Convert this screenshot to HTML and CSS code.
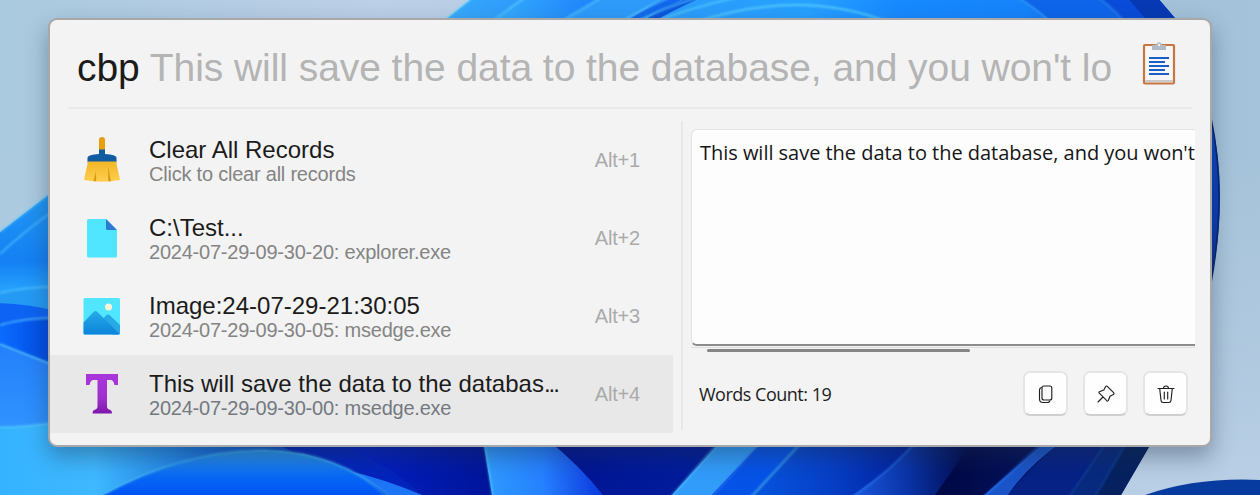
FILE: index.html
```html
<!DOCTYPE html>
<html lang="en">
<head>
<meta charset="utf-8">
<title>Clipboard</title>
<link rel="stylesheet" href="styles.css">
</head>
<body>
<svg class="wallpaper" viewBox="0 0 1260 495" preserveAspectRatio="none" aria-hidden="true">
  <defs>
    <linearGradient id="sky" x1="0" y1="0" x2="1" y2="0"><stop offset="0" stop-color="#a9c9df"/><stop offset=".3" stop-color="#bcd0e7"/><stop offset=".5" stop-color="#b6cde3"/><stop offset=".9" stop-color="#a2c1d8"/><stop offset="1" stop-color="#a5c3da"/></linearGradient>
    <linearGradient id="skyLow" x1="0" y1="0" x2="0" y2="1"><stop offset="0" stop-color="#b5cbe1" stop-opacity="0"/><stop offset="1" stop-color="#b9cfe5"/></linearGradient>
    <linearGradient id="top" gradientUnits="userSpaceOnUse" x1="450" y1="0" x2="1170" y2="0"><stop offset="0" stop-color="#35a9fb"/><stop offset=".16" stop-color="#2b91fc"/><stop offset=".3" stop-color="#2c9dfb"/><stop offset=".5" stop-color="#26a0ff"/><stop offset=".62" stop-color="#178aff"/><stop offset=".8" stop-color="#1683fb"/><stop offset=".92" stop-color="#0d5fe9"/><stop offset="1" stop-color="#0a3fc0"/></linearGradient>
    <linearGradient id="fold" x1="0" y1="0" x2="1" y2="0"><stop offset="0" stop-color="#36aefc"/><stop offset="1" stop-color="#1d80fc"/></linearGradient>
    <linearGradient id="l1" x1="0" y1="0" x2="0" y2="1"><stop offset="0" stop-color="#239af3"/><stop offset=".65" stop-color="#1480f4"/><stop offset="1" stop-color="#2badff"/></linearGradient>
    <linearGradient id="l2" x1="0" y1="0" x2="1" y2="0"><stop offset="0" stop-color="#0a6cff"/><stop offset="1" stop-color="#0047dd"/></linearGradient>
    <linearGradient id="l3" x1="0" y1="0" x2="0" y2="1"><stop offset="0" stop-color="#2480fa"/><stop offset="1" stop-color="#3093ff"/></linearGradient>
    <linearGradient id="low" gradientUnits="userSpaceOnUse" x1="0" y1="0" x2="380" y2="0"><stop offset="0" stop-color="#35b3ff"/><stop offset=".25" stop-color="#3fb8ff"/><stop offset=".55" stop-color="#1770dc"/><stop offset="1" stop-color="#0217a0"/></linearGradient>
    <linearGradient id="dome" x1="0" y1="0" x2="0" y2="1"><stop offset="0" stop-color="#2b93e6"/><stop offset=".6" stop-color="#0768f6"/><stop offset="1" stop-color="#0054f5"/></linearGradient>
    <linearGradient id="wedge" x1="0" y1="0" x2="1" y2="0"><stop offset="0" stop-color="#2f9cff"/><stop offset=".5" stop-color="#2680ff"/><stop offset="1" stop-color="#0b37dc"/></linearGradient>
    <linearGradient id="night" gradientUnits="userSpaceOnUse" x1="360" y1="0" x2="1150" y2="0"><stop offset="0" stop-color="#0320c4"/><stop offset=".2" stop-color="#001290"/><stop offset=".42" stop-color="#011c9c"/><stop offset=".7" stop-color="#00063f"/><stop offset="1" stop-color="#071d77"/></linearGradient>
    <linearGradient id="b2" x1="0" y1="0" x2="1" y2="0"><stop offset="0" stop-color="#0755df"/><stop offset=".5" stop-color="#063dc4"/><stop offset="1" stop-color="#001b94"/></linearGradient>
    <linearGradient id="b3" x1="0" y1="0" x2="1" y2="0"><stop offset="0" stop-color="#1a58dc"/><stop offset=".45" stop-color="#0a34a8"/><stop offset="1" stop-color="#000643"/></linearGradient>
    <linearGradient id="side" x1="0" y1="0" x2="0" y2="1"><stop offset="0" stop-color="#0d48c4"/><stop offset=".6" stop-color="#0a3cb4"/><stop offset="1" stop-color="#06226e"/></linearGradient>
    <filter id="soft" filterUnits="userSpaceOnUse" x="0" y="0" width="1260" height="495"><feGaussianBlur stdDeviation=".8"/></filter>
  </defs>
  <rect width="1260" height="495" fill="url(#sky)"/>
  <rect y="150" width="1260" height="345" fill="url(#skyLow)"/>

  <path d="M440 24 475-4H1156Q1164 8 1173 24Z" fill="url(#top)"/>
  <path d="M490 24 526-4H604L560 24Z" fill="url(#fold)"/>
  <path d="M560 24 604-4H688L630 24Z" fill="#2e9bfb"/>
  <path d="M620 24 668-4H690L632 24Z" fill="#1267ee"/>
  <path d="M638 24Q660 8 694-4H706Q676 8 650 24Z" fill="#0c55dd"/>
  <path d="M1016-4Q1036 8 1056 24H1180L1156-4Z" fill="#0e65ea"/>
  <path d="M1096-4Q1114 8 1126 24H1180L1156-4Z" fill="#0a4cda"/>
  <path d="M1126-4 1150 24H1180L1156-4Z" fill="#0739b4"/>
  <g fill="none" stroke="#5ad2fd" stroke-opacity=".85" stroke-width="1.5" filter="url(#soft)">
    <path d="M440 24 475-4M488 24 527-4M557 24 604-4"/>
    <path d="M618 24Q638 11 670-3M632 24Q662 8 700-3M650 24Q685 9 735-2"/>
    <path d="M696 22Q800-12 888 22" stroke-width="2"/>
    <path d="M1016-4Q1036 8 1052 24" stroke="#3a9df6"/><path d="M1096-4Q1114 8 1126 24" stroke="#2d8df0"/>
  </g>

  <path d="M0 232 56 189V300H0Z" fill="url(#l1)"/>
  <path d="M0 303V292Q24 287 56 287V312Z" fill="#249af4"/>
  <path d="M0 303Q28 304 56 311V330H0Z" fill="#0d63f3"/>
  <path d="M0 325Q24 318 56 318V366L0 344Z" fill="url(#l2)"/>
  <path d="M0 344 56 365V430H0Z" fill="url(#l3)"/>
  <path d="M0 427Q28 427 56 422V440H400V495H0Z" fill="url(#low)"/>
  <path d="M350 440H1153L1121 495H350Z" fill="url(#night)"/>
  <path d="M270 440H320Q380 455 425 498H380Z" fill="#0324bc"/>
  <path d="M103 495Q185 450 265 450Q340 452 385 495Z" fill="url(#dome)"/>
  <path d="M345 470Q385 479 422 495H387Q367 478 345 470Z" fill="#1c75f5"/>
  <g fill="none" stroke="#59c9ff" stroke-opacity=".85" stroke-width="1.5" filter="url(#soft)">
    <path d="M0 232 56 189M0 254Q28 228 56 209M0 293Q24 287 56 287M0 325Q24 318 56 318M0 344 56 366M0 427Q28 427 56 422"/>
    <path d="M103 495Q185 450 265 450Q340 452 388 497" stroke="#45b4ed"/>
  </g>
  <path d="M483 440 492 495H603Q580 466 548 440Z" fill="url(#wedge)"/>
  <path d="M672 495 722 440H764L712 495Z" fill="#329cfa"/>
  <path d="M712 495 764 440H804L752 495Z" fill="#0653e7"/>
  <path d="M752 495 804 440H922L856 495Z" fill="url(#b2)"/>
  <path d="M853 495Q892 469 918 440H974L935 495Z" fill="url(#b3)"/>
  <path d="M984 495 1048 440H1065Q1028 465 1008 495Z" fill="#1b54c8"/>
  <path d="M1008 495Q1030 466 1065 440H1110L1070 495Z" fill="#062285"/>
  <path d="M1070 495 1108 440H1128L1096 495Z" fill="#07297e"/>
  <path d="M1096 495 1128 440H1153L1121 495Z" fill="#052160"/>
  <g fill="none" stroke="#56c9f8" stroke-opacity=".85" stroke-width="1.5" filter="url(#soft)">
    <path d="M484 440 493 497M671 497 721 440M751 497 804 440"/>
    <path d="M712 497 763 440M853 497Q892 469 918 440M984 497 1046 440" stroke="#2876f5"/>
    <path d="M1069 497 1108 440M1095 497 1128 440" stroke="#12469c"/>
  </g>
  <path d="M1206 100Q1234 193 1206 304Z" fill="url(#side)"/>
  <path d="M1211 118Q1227 195 1211 283" fill="none" stroke="#062570" stroke-width="1.5"/>
  <path d="M1145 495Q1197 477 1260 480V495Z" fill="#073ba0"/>
</svg>

<main class="window">
  <header class="query">
    <div class="query-text"><span class="typed">cbp</span> <span class="hint">This will save the data to the database, and you won't lo</span></div>
    <svg class="query-icon" viewBox="0 0 34 44" aria-hidden="true">
      <rect x="2" y="4" width="30" height="38.500" rx="1" fill="#f6f6f6" stroke="#c77543" stroke-width="2.200"/>
      <path d="M3.300 39h27.400v2H3.300z" fill="#c8c8c8"/>
      <path d="M10 4.500Q10 4 11 4h2q1 0 1.300-1a2.900 2.900 0 0 1 5.400 0q.3 1 1.300 1h2q1 0 1 .8V9H10z" fill="#b2bbc5"/>
      <circle cx="17" cy="4" r="1.200" fill="#f2f2f2"/>
      <path d="M7 17h20M7 21h16M7 25h20M7 29h16M7 33h20" stroke="#1d5fc6" stroke-width="2"/>
    </svg>
  </header>
  <div class="content">
    <ul class="results">
      <li class="result">
        <svg class="result-icon" viewBox="0 0 40 48" aria-hidden="true">
          <defs><linearGradient id="brush" x1="0" y1="0" x2="0" y2="1"><stop offset="0" stop-color="#f1b626"/><stop offset="1" stop-color="#ffcf50"/></linearGradient></defs>
          <path d="M17 14V4a3 3 0 0 1 6 0v10z" fill="#e5a00c"/>
          <path d="M17 13.500h6V18q11 .5 11.500 3.500v5h-29v-5Q6 18.500 17 18z" fill="#115ba3"/>
          <path d="M6 25.500h28l4 18.500q-18 3.500-36 0z" fill="url(#brush)"/>
          <path d="m14 35-2.500 10.300h2.700zM26 30l.3 15.300H29z" fill="#d69910"/>
        </svg>
        <div class="result-text"><div class="title">Clear All Records</div><div class="subtitle">Click to clear all records</div></div>
        <span class="hotkey">Alt+1</span>
      </li>
      <li class="result">
        <svg class="result-icon" viewBox="0 0 40 48" aria-hidden="true">
          <path d="M6 5h18l11 11v26q0 1.500-1.500 1.500h-27Q5 43.500 5 42V6.500Q5 5 6.500 5z" fill="#50e6ff"/>
          <path d="M24 5v9.500q0 1.500 1.500 1.500H35z" fill="#2f78d3"/>
        </svg>
        <div class="result-text"><div class="title">C:\Test...</div><div class="subtitle">2024-07-29-09-30-20: explorer.exe</div></div>
        <span class="hotkey">Alt+2</span>
      </li>
      <li class="result">
        <svg class="result-icon" viewBox="0 0 40 48" aria-hidden="true">
          <defs><linearGradient id="hill" x1="0" y1="0" x2="0" y2="1"><stop offset="0" stop-color="#27abe8"/><stop offset="1" stop-color="#0b83da"/></linearGradient></defs>
          <rect x="1.500" y="6" width="36.500" height="36.500" rx="1.500" fill="#50e6ff"/>
          <path d="m20 28 4-4.500q2-2 4 0L38 33v8q0 1.500-1.500 1.500H30z" fill="#28a9e6"/>
          <path d="m1.500 30.500 10-10.500q2-2 4 0L37.500 41.700q-.5.800-1.300.8H3q-1.500 0-1.500-1.500z" fill="url(#hill)"/>
          <circle cx="26.500" cy="15" r="3.500" fill="#fff3d5"/>
        </svg>
        <div class="result-text"><div class="title">Image:24-07-29-21:30:05</div><div class="subtitle">2024-07-29-09-30-05: msedge.exe</div></div>
        <span class="hotkey">Alt+3</span>
      </li>
      <li class="result selected">
        <svg class="result-icon" viewBox="0 0 40 48" aria-hidden="true">
          <defs><linearGradient id="type" x1="0" y1="0" x2="0" y2="1"><stop offset="0" stop-color="#a936dc"/><stop offset=".6" stop-color="#9f30ce"/><stop offset="1" stop-color="#7d17ab"/></linearGradient></defs>
          <path d="M4 4h32v11h-3.500q-1-5-4-5H25v26.500q0 2.500 3.500 3.500 1.500.5 1.500 3.500H10.500Q10.500 40.500 12 40q3.500-1 3.500-3.500V10h-4q-3 0-4 5H4z" fill="url(#type)"/>
        </svg>
        <div class="result-text"><div class="title">This will save the data to the databas<span class="trim">...</span></div><div class="subtitle">2024-07-29-09-30-00: msedge.exe</div></div>
        <span class="hotkey">Alt+4</span>
      </li>
    </ul>
    <section class="preview">
      <div class="textbox">This will save the data to the database, and you won't</div>
      <div class="scroll-track"><div class="scroll-thumb"></div></div>
      <footer class="actions">
        <span class="count">Words Count: 19</span>
        <button class="action" aria-label="Copy"><svg viewBox="0 0 20 20"><rect x="6" y="2" width="9.800" height="14" rx="2"/><path d="M5.500 3.500Q3.500 4 3.500 6v9q0 3.500 3.500 3.500h4.500q1.700 0 2.300-1.500"/></svg></button>
        <button class="action" aria-label="Pin"><svg viewBox="0 0 20 20"><path d="m11.300 2.400 6.300 6.300q1 1-.3 1.800l-3.300 1.700-1.700 4.300q-.6 1-1.500.2L3.300 9.200q-.8-.9.200-1.500l4.300-1.700 1.700-3.300q.8-1.300 1.800-.3zM7 13l-5 5"/></svg></button>
        <button class="action" aria-label="Delete"><svg viewBox="0 0 20 20"><path d="M2 4.500h16M7.500 4.500a2.500 2.500 0 0 1 5 0M3.700 4.500 5 16.500q.2 2 2 2h6q1.800 0 2-2l1.300-12M8.300 8v7M11.700 8v7"/></svg></button>
      </footer>
    </section>
  </div>
</main>
</body>
</html>
```
FILE: styles.css
```css
* { box-sizing: border-box; }

body {
  margin: 0;
  width: 1260px;
  height: 495px;
  padding: 18px 48px;
  overflow: hidden;
  font-family: "Liberation Sans", Arial, sans-serif;
}

.wallpaper {
  position: absolute;
  inset: 0;
  width: 1260px;
  height: 495px;
}

.window {
  position: relative;
  width: 1164px;
  height: 429px;
  border: 2px solid #a8a8a8;
  border-radius: 9px;
  background: #f3f3f3;
  box-shadow: 0 10px 22px rgba(30, 45, 65, .38);
  overflow: hidden;
}

.query {
  display: flex;
  align-items: center;
  justify-content: space-between;
  height: 89px;
  margin: 0 18px;
  padding: 0 16px 0 9px;
  border-bottom: 2px solid #e9e9e9;
}

.query-text {
  padding-top: 8px;
  font-size: 39px;
  letter-spacing: -.06px;
  line-height: 46px;
  white-space: pre;
}

.typed { color: #1b1b1b; }
.hint { color: #b4b4b4; }

.query-icon {
  width: 34px;
  height: 44px;
  margin-bottom: 2px;
}

.content {
  display: flex;
  padding-top: 12px;
}

.results {
  width: 623px;
  margin: 0;
  padding: 0;
  list-style: none;
}

.result {
  display: flex;
  align-items: center;
  height: 78px;
  padding: 0 33px 0 32px;
}

.selected { background: #e8e8e8; }

.result-icon {
  width: 40px;
  height: 48px;
  margin-right: 27px;
}

.result-text {
  flex: 1;
  padding-top: 2px;
  white-space: nowrap;
}

.title {
  color: #1b1b1b;
  font-size: 24px;
  line-height: 26px;
}

.trim { letter-spacing: -2px; }

.subtitle {
  color: #848484;
  font-size: 20px;
  letter-spacing: -.22px;
  line-height: 22px;
}

.selected .subtitle { color: #747980; }

.hotkey {
  color: #aaa;
  font-size: 20px;
  letter-spacing: -.2px;
}

.preview {
  display: flex;
  flex-direction: column;
  width: 514px;
  height: 309px;
  margin-left: 8px;
  padding: 8px 0 0 8px;
  border-left: 2px solid #e8e8e8;
  font-family: "Open Sans", "Noto Sans", sans-serif;
}

.textbox {
  height: 217px;
  padding: 9px 0 0 8px;
  overflow: hidden;
  border: 1px solid #e3e3e3;
  border-right: 0;
  border-bottom: 2px solid #8b8b8b;
  border-radius: 6px 0 0 6px;
  background: #fdfdfd;
  color: #151515;
  font-size: 20px;
  letter-spacing: -.03px;
  line-height: 28px;
  white-space: nowrap;
}

.scroll-track {
  margin-top: 1px;
  padding: 1px 0 0 16px;
  border-top: 1px solid #dedede;
}

.scroll-thumb {
  width: 263px;
  height: 3px;
  border-radius: 2px;
  background: #858585;
}

.actions {
  display: flex;
  align-items: center;
  gap: 15px;
  margin-top: 19px;
  padding: 0 7px 0 8px;
}

.count {
  flex: 1;
  color: #1d1d1d;
  font-size: 18px;
  letter-spacing: -.5px;
}

.action {
  display: grid;
  place-items: center;
  width: 45px;
  height: 45px;
  padding: 0;
  border: 2px solid #e5e5e5;
  border-bottom-color: #d0d0d0;
  border-radius: 7px;
  background: #fefefe;
}

.action svg {
  width: 20px;
  height: 20px;
  fill: none;
  stroke: #202020;
  stroke-width: 1.150;
  stroke-linejoin: round;
  stroke-linecap: round;
}
```
